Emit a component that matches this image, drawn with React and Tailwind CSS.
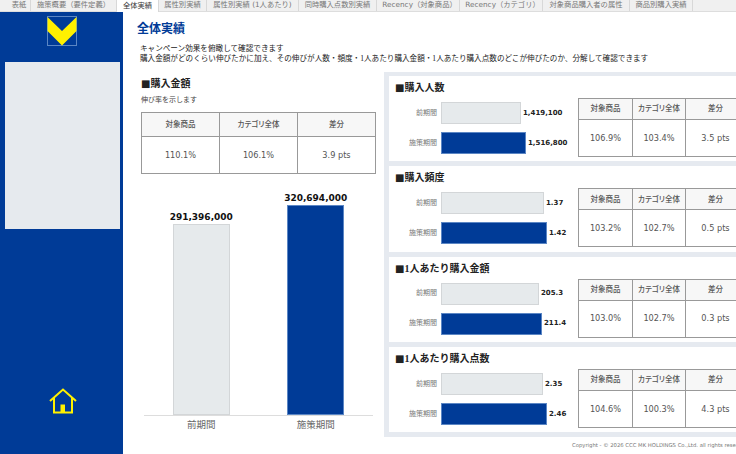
const font = { fontFamily: '"DejaVu Sans", "Noto Sans CJK JP", sans-serif' };

const tabs = [
  { label: '表紙', w: 'w-[23px]' },
  { label: '施策概要（要件定義）', w: 'w-[86px]' },
  { label: '全体実績', w: 'w-[42px]', active: true },
  { label: '属性別実績', w: 'w-[48px]' },
  { label: '属性別実績 (1人あたり)', w: 'w-[92px]' },
  { label: '同時購入点数別実績', w: 'w-[78px]' },
  { label: 'Recency（対象商品）', w: 'w-[83px] pl-[3px]' },
  { label: 'Recency（カテゴリ）', w: 'w-[83px] pl-[3px]' },
  { label: '対象商品購入者の属性', w: 'w-[87px]' },
  { label: '商品別購入実績', w: 'w-[63px]' },
];

const cards = [
  { title: '■購入人数', prev: '1,419,100', cur: '1,516,800', prevW: 'w-[80px]', curW: 'w-[85px]', a: '106.9%', b: '103.4%', c: '3.5 pts' },
  { title: '■購入頻度', prev: '1.37', cur: '1.42', prevW: 'w-[103px]', curW: 'w-[106px]', a: '103.2%', b: '102.7%', c: '0.5 pts' },
  { title: <>■<One />人あたり購入金額</>, prev: '205.3', cur: '211.4', prevW: 'w-[98px]', curW: 'w-[101px]', a: '103.0%', b: '102.7%', c: '0.3 pts' },
  { title: <>■<One />人あたり購入点数</>, prev: '2.35', cur: '2.46', prevW: 'w-[102px]', curW: 'w-[106px]', a: '104.6%', b: '100.3%', c: '4.3 pts' },
];

function One() {
  return <span className="font-['Liberation_Serif']">1</span>;
}

function RateTable({ a, b, c, widths, headH, bodyH, open }) {
  const head = ['対象商品', 'カテゴリ全体', '差分'];
  const body = [a, b, c];
  return (
    <div className={`border border-[#999] flex flex-col shrink-0 ${open ? 'border-r-0' : ''}`}>
      <div className={`flex bg-[#f7f7f7] border-b border-[#999] ${headH}`}>
        {head.map((h, i) => (
          <div key={h} className={`${widths[i]} flex items-center justify-center font-medium text-[#555] text-[7.5px] [font-feature-settings:"palt"] ${i > 0 ? 'border-l border-[#999]' : ''}`}>{h}</div>
        ))}
      </div>
      <div className={`flex bg-white ${bodyH}`}>
        {body.map((v, i) => (
          <div key={i} className={`${widths[i]} flex items-center justify-center text-[#555] text-[8.2px] ${i > 0 ? 'border-l border-[#999]' : ''}`}>{v}</div>
        ))}
      </div>
    </div>
  );
}

function HBar({ label, value, w, blue }) {
  return (
    <div className="flex items-center h-[22px]">
      <div className="w-[46px] pr-[4px] text-right whitespace-nowrap text-[7px] text-[#777]">{label}</div>
      <div className={`${w} h-full border ${blue ? 'bg-[#003b97] border-[#5b86c4]' : 'bg-[#e6eaec] border-[#d3d6d8]'}`} />
      <div className="ml-[2px] text-[7px] font-bold text-[#222]">{value}</div>
    </div>
  );
}

function Card({ card }) {
  return (
    <div className="bg-white h-[85.3px] pl-[6px] shrink-0">
      <div className="pt-[5px] text-[10px] leading-[13px] font-bold text-[#222]">{card.title}</div>
      <div className="flex mt-[8px]">
        <div className="w-[183px] flex flex-col gap-[8px] shrink-0">
          <HBar label="前期間" value={card.prev} w={card.prevW} />
          <HBar label="施策期間" value={card.cur} w={card.curW} blue />
        </div>
        <div className="-mt-[4px]">
          <RateTable
            a={card.a} b={card.b} c={card.c}
            widths={['w-[53px]', 'w-[53px]', 'w-[60px]']}
            headH="h-[21px]" bodyH="h-[36px]"
            open
          />
        </div>
      </div>
    </div>
  );
}

function VBar({ value, h, blue }) {
  return (
    <div className="flex-1 flex flex-col items-center justify-end">
      <div className="text-[9px] leading-[14px] font-bold text-[#111]">{value}</div>
      <div className={`w-[57px] ${h} border ${blue ? 'bg-[#003b97] border-[#5b86c4]' : 'bg-[#e6eaec] border-[#d3d6d8]'}`} />
    </div>
  );
}

export default function App() {
  return (
    <div style={font} className="w-[736px] h-[454px] overflow-hidden bg-white flex flex-col">
      <div className="h-3 shrink-0 flex pl-2 bg-[#f0f0f0] border-b border-[#ddd]">
        {tabs.map(t => (
          <div key={t.label} className={`${t.w} shrink-0 flex items-center justify-center whitespace-nowrap text-[7.3px] border-r border-[#d8d8d8] ${t.active ? 'bg-white text-[#333] h-3' : 'text-[#777]'}`}>
            {t.label}
          </div>
        ))}
      </div>

      <div className="flex flex-1 min-h-0">
        <aside className="w-[123px] shrink-0 bg-[#003b97] flex flex-col items-center">
          <svg className="mt-1" width="30" height="30" viewBox="0 0 30 30">
            <rect x="0.5" y="0.5" width="29" height="29" fill="none" stroke="#5b86c4" />
            <path d="M0.5 1 L15 15 L29.5 1 L29.5 15 L15 29.5 L0.5 15 Z" fill="#fff100" />
          </svg>
          <div className="mt-4 self-start ml-[5px] w-[115px] h-[167px] bg-[#e6eaee]" />
          <svg className="mt-[159px] ml-[2px]" width="28" height="26" viewBox="0 0 28 26" fill="none" stroke="#fff100" strokeWidth="2">
            <path d="M1 13 L14 1.5 L27 13" />
            <path d="M5 10 V24.5 H23 V10" />
            <rect x="11.5" y="16.5" width="4.5" height="8" fill="#fff100" stroke="none" />
          </svg>
        </aside>

        <main className="flex-1 min-w-0 flex flex-col">
          <div className="h-[60px] shrink-0 pl-[14px] pt-[10px]">
            <h1 className="text-[12px] leading-[15px] font-bold text-[#003b97]">全体実績</h1>
            <div className="mt-[7px] ml-[3px] text-[7.6px] leading-[10px] text-[#222] whitespace-nowrap">
              <p>キャンペーン効果を俯瞰して確認できます</p>
              <p>購入金額がどのくらい伸びたかに加え、その伸びが人数・頻度・<One />人あたり購入金額・<One />人あたり購入点数のどこが伸びたのか、分解して確認できます</p>
            </div>
          </div>

          <div className="flex">
            <section className="w-[261px] shrink-0 pl-[18px] pt-[5px]">
              <h2 className="text-[10px] leading-[14px] font-bold text-[#222]">■購入金額</h2>
              <p className="mt-[4px] text-[7px] leading-[10px] text-[#444]">伸び率を示します</p>
              <div className="mt-[7px] w-[235px]">
                <RateTable
                  a="110.1%" b="106.1%" c="3.9 pts"
                  widths={['w-[77px]', 'w-[78px]', 'w-[78px]']}
                  headH="h-[24px]" bodyH="h-[36px]"
                />
              </div>
              <div className="mt-[16px] ml-[3px] w-[229px]">
                <div className="h-[226px] flex items-end border-b border-[#ddd]">
                  <VBar value="291,396,000" h="h-[191px]" />
                  <VBar value="320,694,000" h="h-[210px]" blue />
                </div>
                <div className="flex text-[9.5px] leading-[17px] text-[#666]">
                  <div className="flex-1 text-center">前期間</div>
                  <div className="flex-1 text-center">施策期間</div>
                </div>
              </div>
            </section>

            <section className="flex-1 min-w-0 bg-[#e6eaf0] pl-[5px] pt-[4px] pb-[5px] h-[365px] flex flex-col gap-[5px]">
              {cards.map((c, i) => <Card key={i} card={c} />)}
            </section>
          </div>

          <div className="flex-1 pl-[449px] pt-[5px] text-[5.3px] text-[#777] whitespace-nowrap">
            Copyright - © 2026 CCC MK HOLDINGS Co.,Ltd. all rights reserved.
          </div>
        </main>
      </div>
    </div>
  );
}
